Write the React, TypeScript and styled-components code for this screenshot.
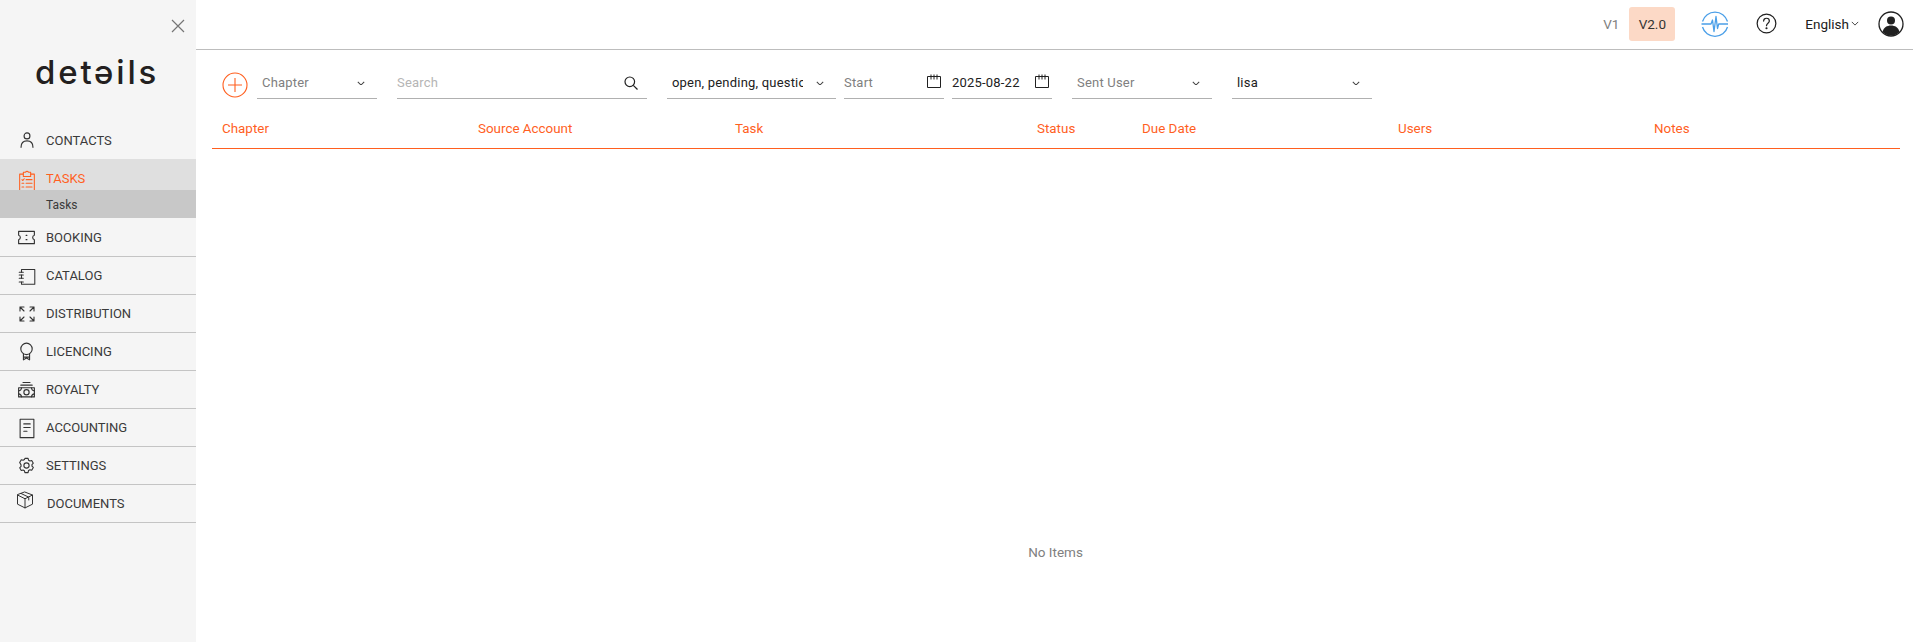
import { ReactNode } from 'react';
import styled, { createGlobalStyle } from 'styled-components';

const GlobalStyle = createGlobalStyle`
    html, body {
        margin: 0;
        padding: 0;
        height: 100%;
        background: #fff;
    }
    body {
        font-family: 'Roboto', 'Liberation Sans', sans-serif;
        color: #212121;
    }
    * {
        box-sizing: border-box;
    }
`;

const ORANGE = '#ff5f1f';

const Svg = ({ size = 24, children, color = 'currentColor', width = 1.2 }: { size?: number; children: ReactNode; color?: string; width?: number }) => (
    <svg width={size} height={size} viewBox="0 0 24 24" fill="none" stroke={color} strokeWidth={width} strokeLinecap="round" strokeLinejoin="round">
        {children}
    </svg>
);

const ContactsIcon = () => (
    <Svg size={22} width={1.25}>
        <circle cx="12" cy="7.500" r="3.200" />
        <path d="M5.500 20c0-4.500 2.800-7 6.500-7s6.500 2.500 6.500 7" />
    </Svg>
);

const TasksIcon = () => (
    <Svg size={22} color={ORANGE} width={1.15}>
        <path d="M8 4.500H4v19h16v-19h-4" />
        <path d="M8 7V2.500h2.500c.2-1.300 2.800-1.300 3 0H16V7z" />
        <path d="M6.500 10.500l1 1 1.500-2M11 10.500h6.500M6.500 14.500h2M11 14.500h6.500M6.500 18.500h2M11 18.500h6.500" />
    </Svg>
);

const BookingIcon = () => (
    <Svg size={21} width={1.3}>
        <path d="M3 5h18v4.500c-2.600.6-2.600 4.400 0 5V19H3v-4.500c2.600-.6 2.600-4.400 0-5z" />
        <path d="M11.500 9.500h1M11.500 14.500h1" />
    </Svg>
);

const CatalogIcon = () => (
    <Svg size={22} width={1.15}>
        <path d="M6 5h14.500v16H6v-2.500M6 5v3M6 11v3.500" />
        <path d="M3.500 8H8M3.500 11H8M3.500 14.500H8M3.500 18.500H8" />
    </Svg>
);

const DistributionIcon = () => (
    <Svg width={1.1}>
        <path d="M5 9V5h4M5 5l4 4M19 9V5h-4M19 5l-4 4M5 15v4h4M5 19l4-4M19 15v4h-4M19 19l-4-4" />
    </Svg>
);

const LicencingIcon = () => (
    <Svg size={21} width={1.3}>
        <circle cx="12" cy="9" r="6.500" />
        <path d="M8.500 15v6.500l3.500-2 3.500 2V15M8.500 18.500h7" />
    </Svg>
);

const RoyaltyIcon = () => (
    <Svg size={21} width={1.3}>
        <path d="M8 4h8M5.500 7h13M3 10h18v10.500H3z" />
        <circle cx="12" cy="15.200" r="3" />
        <path d="M3 13.500c2 0 3-1 3.400-3.500M21 13.500c-2 0-3-1-3.400-3.500M3 17c2 0 3 1 3.400 3.500M21 17c-2 0-3 1-3.400 3.500" />
    </Svg>
);

const AccountingIcon = () => (
    <Svg size={22} width={1.2}>
        <path d="M4.500 2.500h15v20h-15z" />
        <path d="M8.500 7.500h7M8.500 11.500h7M8.500 15.500h3.500" />
    </Svg>
);

const SettingsIcon = () => (
    <Svg size={19} width={1.4}>
        <path d="M10 3h4l.6 2.300 1.700 1 2.300-.6 2 3.400-1.700 1.700v2l1.700 1.700-2 3.400-2.300-.6-1.700 1L14 21h-4l-.6-2.300-1.700-1-2.300.6-2-3.400 1.700-1.700v-2L3.400 8.100l2-3.400 2.300.6 1.700-1z" />
        <circle cx="12" cy="12" r="3.300" />
    </Svg>
);

const DocumentsIcon = () => (
    <Svg size={20} width={1.2}>
        <path d="M12 2.500l9 3.500v11l-9 4.500-9-4.500V6z" />
        <path d="M3 6l9 4.500L21 6M12 10.500v11M7.500 4.300l9 4.300v3.400" />
    </Svg>
);

const CloseIcon = () => (
    <svg width="14" height="14" viewBox="0 0 14 14" fill="none" stroke="#757575" strokeWidth="1.200">
        <path d="M1 1l12 12M13 1L1 13" />
    </svg>
);

const Chevron = ({ size = 8 }: { size?: number }) => (
    <IconNudge>
        <svg width={size} height={size * 0.6} viewBox="0 0 10 6" fill="none" stroke="#424242" strokeWidth="1.300">
            <path d="M1 1l4 4 4-4" />
        </svg>
    </IconNudge>
);

const CalendarIcon = () => (
    <CalendarWrap>
        <svg width="14" height="14" viewBox="0 0 14 14" fill="none" stroke="#212121" strokeWidth="1">
            <path d="M.5 2.500h13v11H.5z" />
            <path d="M4 .5v5M7 .5v5M10 .5v5" />
        </svg>
    </CalendarWrap>
);

const SearchIcon = () => (
    <IconNudge>
        <svg width="14" height="14" viewBox="0 0 14 14" fill="none" stroke="#212121" strokeWidth="1.200">
            <circle cx="5.800" cy="5.800" r="4.800" />
            <path d="M9.300 9.300L13.500 13.500" />
        </svg>
    </IconNudge>
);

const PlusIcon = () => (
    <svg width="26" height="26" viewBox="0 0 26 26" fill="none" stroke={ORANGE} strokeWidth="1.100">
        <circle cx="13" cy="13" r="12" />
        <path d="M13 6v14M6 13h14" />
    </svg>
);

const PulseIcon = () => (
    <svg width="30" height="30" viewBox="0 0 30 30" fill="none" stroke="#4a9fe8" strokeWidth="1.300" strokeLinejoin="round">
        <path d="M2.500 12.500a13 13 0 0 1 25 0" />
        <path d="M27.500 18a13 13 0 0 1 -25 0" />
        <path d="M1.500 15h9.500l1.500-4 1.500 11.500 2-15 1.500 12 1.200-4.500h9.300" />
    </svg>
);

const HelpIcon = () => (
    <svg width="21" height="21" viewBox="0 0 22 22" fill="none" stroke="#212121" strokeWidth="1.300">
        <circle cx="11" cy="11" r="9.800" />
        <path d="M8 8.500c0-4 6-4 6 0 0 2.300-3 2.300-3 4.800" strokeLinecap="round" />
        <circle cx="11" cy="16" r="0.500" fill="#212121" />
    </svg>
);

const AvatarIcon = () => (
    <svg width="26" height="26" viewBox="0 0 26 26">
        <circle cx="13" cy="13" r="12" fill="none" stroke="#212121" strokeWidth="1.300" />
        <circle cx="13" cy="9.500" r="4" fill="#212121" />
        <path d="M4.500 21c1-4.500 4.500-6.500 8.500-6.500s7.500 2 8.500 6.500a12 12 0 0 1 -17 0z" fill="#212121" />
    </svg>
);

const navItems = [
    { label: 'BOOKING', icon: <BookingIcon /> },
    { label: 'CATALOG', icon: <CatalogIcon /> },
    { label: 'DISTRIBUTION', icon: <DistributionIcon /> },
    { label: 'LICENCING', icon: <LicencingIcon /> },
    { label: 'ROYALTY', icon: <RoyaltyIcon /> },
    { label: 'ACCOUNTING', icon: <AccountingIcon /> },
    { label: 'SETTINGS', icon: <SettingsIcon /> },
];

const columns = [
    { label: 'Chapter', width: 256 },
    { label: 'Source Account', width: 257 },
    { label: 'Task', width: 302 },
    { label: 'Status', width: 105 },
    { label: 'Due Date', width: 256 },
    { label: 'Users', width: 256 },
    { label: 'Notes', width: 246 },
];

function App() {
    return (
        <Page>
            <GlobalStyle />
            <Sidebar>
                <CloseRow>
                    <CloseIcon />
                </CloseRow>
                <Logo>detəils</Logo>
                <Nav>
                    <NavRow>
                        <NavIcon>
                            <ContactsIcon />
                        </NavIcon>
                        CONTACTS
                    </NavRow>
                    <ActiveRow>
                        <NavIcon>
                            <TasksIcon />
                        </NavIcon>
                        TASKS
                    </ActiveRow>
                    <SubRow>Tasks</SubRow>
                    {navItems.map((item) => (
                        <NavRow key={item.label} bordered>
                            <NavIcon>{item.icon}</NavIcon>
                            {item.label}
                        </NavRow>
                    ))}
                    <NavRow bordered>
                        <DocumentsSlot>
                            <DocumentsIcon />
                        </DocumentsSlot>
                        DOCUMENTS
                    </NavRow>
                </Nav>
            </Sidebar>

            <Main>
                <TopBar>
                    <VersionText>V1</VersionText>
                    <VersionChip>V2.0</VersionChip>
                    <PulseSlot>
                        <PulseIcon />
                    </PulseSlot>
                    <HelpSlot>
                        <HelpIcon />
                    </HelpSlot>
                    <Language>
                        English
                        <LangCaret>
                            <svg width="8" height="5" viewBox="0 0 10 6" fill="none" stroke="#424242" strokeWidth="1.200">
                                <path d="M1 1l4 4 4-4" />
                            </svg>
                        </LangCaret>
                    </Language>
                    <AvatarSlot>
                        <AvatarIcon />
                    </AvatarSlot>
                </TopBar>

                <Filters>
                    <AddButton>
                        <PlusIcon />
                    </AddButton>
                    <Field width={120}>
                        <FieldText muted>Chapter</FieldText>
                        <Chevron />
                    </Field>
                    <SearchField width={250} gapLeft={20} flush>
                        <FieldText faint>Search</FieldText>
                        <SearchIcon />
                    </SearchField>
                    <Field width={169} gapLeft={20}>
                        <ClippedText>open, pending, question</ClippedText>
                        <Chevron />
                    </Field>
                    <DateField width={100} gapLeft={8} flush>
                        <FieldText muted>Start</FieldText>
                        <CalendarIcon />
                    </DateField>
                    <DateField width={100} gapLeft={8} flush>
                        <FieldText>2025-08-22</FieldText>
                        <CalendarIcon />
                    </DateField>
                    <Field width={140} gapLeft={20}>
                        <FieldText muted>Sent User</FieldText>
                        <Chevron />
                    </Field>
                    <Field width={140} gapLeft={20}>
                        <FieldText>lisa</FieldText>
                        <Chevron />
                    </Field>
                </Filters>

                <TableHead>
                    {columns.map((col) => (
                        <HeadCell key={col.label} width={col.width}>
                            {col.label}
                        </HeadCell>
                    ))}
                </TableHead>
                <Empty>No Items</Empty>
            </Main>
        </Page>
    );
}

const Page = styled.div`
    display: flex;
    height: 642px;
    overflow: hidden;
`;

const Sidebar = styled.aside`
    flex: 0 0 196px;
    background: #f5f5f5;
    display: flex;
    flex-direction: column;
`;

const CloseRow = styled.div`
    height: 60px;
    padding: 18px 0 0 171px;
`;

const Logo = styled.div`
    height: 61px;
    padding-left: 35px;
    font-family: 'Inter', sans-serif;
    font-size: 33px;
    font-weight: 500;
    line-height: 24px;
    letter-spacing: 2.800px;
    color: #231f20;
`;

const Nav = styled.nav`
    display: flex;
    flex-direction: column;
`;

const NavRow = styled.div<{ bordered?: boolean }>`
    height: 38px;
    display: flex;
    align-items: center;
    font-size: 13px;
    color: #3a3a3a;
    border-bottom: ${({ bordered }) => (bordered ? '1px solid #c4c4c4' : 'none')};
`;

const NavIcon = styled.span`
    flex: 0 0 46px;
    display: flex;
    justify-content: center;
    padding-left: 7px;
    color: #333;
`;

const DocumentsSlot = styled.span`
    flex: 0 0 47px;
    display: flex;
    justify-content: center;
    padding: 0 0 7px 2px;
    color: #333;
`;

const ActiveRow = styled(NavRow)`
    height: 31px;
    background: #dfdfdf;
    color: ${ORANGE};
    align-items: flex-start;
    padding-top: 12px;
    line-height: 15px;

    ${NavIcon} {
        margin-top: -1px;
        height: 19px;
    }
`;

const SubRow = styled.div`
    height: 28px;
    margin-bottom: 1px;
    background: #c8c8c8;
    padding-left: 46px;
    font-size: 12px;
    line-height: 30px;
    color: #3a3a3a;
`;

const Main = styled.main`
    flex: 1;
    min-width: 0;
    display: flex;
    flex-direction: column;
`;

const TopBar = styled.header`
    height: 50px;
    flex: none;
    display: flex;
    align-items: center;
    justify-content: flex-end;
    padding: 0 9px 2px 0;
    border-bottom: 1px solid #bdbdbd;
`;

const VersionText = styled.span`
    font-size: 13.500px;
    color: #808080;
    margin-right: 10px;
`;

const VersionChip = styled.span`
    width: 46px;
    height: 34px;
    display: flex;
    align-items: center;
    justify-content: center;
    background: #fcd9c6;
    border-radius: 3px;
    font-size: 13.500px;
    color: #333;
`;

const PulseSlot = styled.span`
    display: flex;
    margin-left: 25px;
`;

const HelpSlot = styled.span`
    display: flex;
    margin-left: 26px;
`;

const Language = styled.span`
    display: flex;
    align-items: center;
    gap: 2px;
    margin-left: 28px;
    font-size: 13.500px;
    color: #212121;
`;

const LangCaret = styled.span`
    display: flex;
`;

const AvatarSlot = styled.span`
    display: flex;
    margin-left: 19px;
`;

const Filters = styled.div`
    flex: none;
    height: 49px;
    padding: 22px 0 0 26px;
    display: flex;
    align-items: flex-start;
`;

const AddButton = styled.span`
    flex: none;
    display: flex;
    width: 35px;
`;

const Field = styled.div<{ width: number; gapLeft?: number; flush?: boolean }>`
    flex: none;
    width: ${({ width }) => width}px;
    margin-left: ${({ gapLeft }) => gapLeft ?? 0}px;
    height: 27px;
    padding: 0 12px 6px ${({ flush }) => (flush ? 0 : 5)}px;
    display: flex;
    align-items: center;
    justify-content: space-between;
    border-bottom: 1px solid #b0b0b0;
`;

const SearchField = styled(Field)`
    padding-right: 9px;
`;

const DateField = styled(Field)`
    padding-right: 3px;
`;

const IconNudge = styled.span`
    display: flex;
    margin-top: 2px;
`;

const CalendarWrap = styled.span`
    display: flex;
    margin-top: -3px;
`;

const FieldText = styled.span<{ muted?: boolean; faint?: boolean }>`
    font-size: 13px;
    letter-spacing: 0.2px;
    color: ${({ muted, faint }) => (faint ? '#b5b5b5' : muted ? '#808080' : '#212121')};
`;

const ClippedText = styled(FieldText)`
    width: 131px;
    overflow: hidden;
    white-space: nowrap;
`;

const TableHead = styled.div`
    flex: none;
    margin: 0 13px 0 16px;
    height: 50px;
    padding: 20px 0 0 10px;
    display: flex;
    border-bottom: 1px solid ${ORANGE};
`;

const HeadCell = styled.div<{ width: number }>`
    flex: 0 0 ${({ width }) => width}px;
    font-size: 13.400px;
    line-height: 20px;
    color: ${ORANGE};
`;

const Empty = styled.div`
    padding: 395px 0 0 2px;
    text-align: center;
    font-size: 13.500px;
    color: #808080;
    line-height: 16px;
`;

export default App;
